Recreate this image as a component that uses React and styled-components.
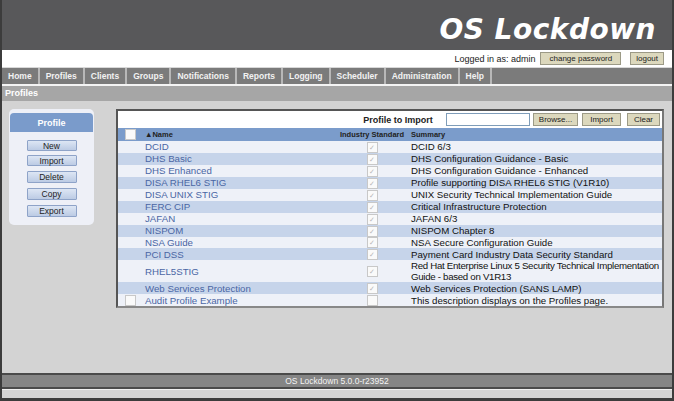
import styled, { createGlobalStyle } from 'styled-components';

const GlobalStyle = createGlobalStyle`
  html, body {
    margin: 0;
    padding: 0;
    background: #d3d3d3;
  }
  body {
    font-family: "Liberation Sans", Arial, sans-serif;
    font-size: 10px;
  }
`;

const Page = styled.div`
  width: 674px;
  height: 401px;
  box-sizing: border-box;
  border-left: 2px solid #3c3c3c;
  border-right: 2px solid #3c3c3c;
  border-bottom: 3px solid #3c3c3c;
  display: flex;
  flex-direction: column;
  background: #d3d3d3;
  overflow: hidden;
`;

const Banner = styled.div`
  height: 50px;
  background: #58585a;
  display: flex;
  align-items: flex-end;
  justify-content: flex-end;
  padding-right: 16px;
`;

const Title = styled.h1`
  margin: 0 0 4px;
  color: #fff;
  font-family: "DejaVu Sans", Verdana, sans-serif;
  font-weight: bold;
  font-style: italic;
  font-size: 28px;
  letter-spacing: 0.5px;
`;

const UserBar = styled.div`
  height: 17px;
  background: #fff;
  display: flex;
  align-items: center;
  justify-content: flex-end;
  gap: 5px;
  padding-right: 8px;
  font-size: 9px;
  color: #222;
`;

const SmallButton = styled.button`
  font-family: "Liberation Sans", Arial, sans-serif;
  font-size: 8px;
  height: 13px;
  padding: 0 ${p => p.$pad || 5}px;
  margin: 0 0 0 ${p => p.$ml || 0}px;
  background: #dcd8bd;
  border: 1px solid #9c9a86;
  color: #222;
  line-height: 11px;
`;

const Nav = styled.div`
  height: 16px;
  background: #7b7b7b;
  border-top: 1px solid #d8d8d8;
  border-bottom: 2px solid #f4f4f4;
  display: flex;
`;

const NavItem = styled.div`
  padding: 0 6px;
  color: #f2f2f2;
  font-weight: bold;
  font-size: 8.5px;
  line-height: 16px;
  border-right: 2px solid #b8b8b8;
`;

const SubHeader = styled.div`
  height: 15px;
  background: #a6a6a6;
  color: #fff;
  font-weight: bold;
  font-size: 9px;
  line-height: 15px;
  padding-left: 3px;
`;

const Content = styled.div`
  flex: 1;
  display: flex;
  align-items: flex-start;
  gap: 22px;
  padding: 8px 8px 0 7px;
`;

const SidePanel = styled.div`
  width: 85px;
  background: #eef0f7;
  border-radius: 5px;
  padding: 4px 0 8px;
  display: flex;
  flex-direction: column;
  align-items: center;
`;

const PanelHead = styled.div`
  align-self: stretch;
  margin: 0 1px 4px;
  background: #7a9bcb;
  border-radius: 4px 4px 0 0;
  color: #fff;
  text-align: center;
  font-weight: bold;
  font-size: 9px;
  height: 19px;
  line-height: 21px;
`;

const PanelButton = styled.button`
  width: 50px;
  height: ${p => p.$h || 11}px;
  margin: ${p => p.$mt || 4}px 0 0;
  padding: 0;
  font-family: "Liberation Sans", Arial, sans-serif;
  font-size: 8.5px;
  color: #222;
  background: linear-gradient(#dde6f4, #bccbe4);
  border: 1px solid #8ea3c8;
  border-radius: 1px;
`;

const TableBox = styled.div`
  flex: 1;
  background: #fff;
  border: 2px solid #555;
  border-right-color: #777;
  border-bottom-color: #888;
`;

const ImportBar = styled.div`
  height: 17px;
  display: flex;
  align-items: center;
  justify-content: flex-end;
  padding-right: 2px;
`;

const ImportLabel = styled.span`
  font-weight: bold;
  font-size: 9px;
  color: #222;
  margin-right: 13px;
`;

const FileInput = styled.div`
  width: 82px;
  height: 11px;
  border: 1px solid #7f9db9;
  background: #fff;
`;

const Grid = styled.table`
  width: 100%;
  table-layout: fixed;
  border-collapse: collapse;
  font-size: 9.7px;
`;

const HeadCell = styled.th`
  background: #7b9ccb;
  color: #222;
  font-size: 7.5px;
  font-weight: bold;
  text-align: ${p => p.$align || 'left'};
  height: 13px;
  padding: 0 2px;
  white-space: nowrap;
`;

const Row = styled.tr`
  background: ${p => (p.$alt ? '#c6d4ea' : '#eef1f8')};
`;

const Cell = styled.td`
  padding: 0 2px;
  height: 11.2px;
  line-height: 11px;
  vertical-align: middle;
  white-space: ${p => (p.$tight ? 'pre' : 'normal')};
  letter-spacing: ${p => (p.$tight ? '-0.3px' : 'normal')};
  color: ${p => (p.$link ? '#4a66a4' : '#111')};
  text-align: ${p => p.$align || 'left'};
`;

const Check = styled.span`
  display: inline-block;
  width: 9px;
  height: 9px;
  vertical-align: middle;
  border: 1px solid #c8c8c8;
  background: #fafafa;
  color: #b8b8b8;
  font-size: 7px;
  line-height: 9px;
  text-align: center;
`;

const Footer = styled.div`
  margin-top: auto;
`;

const FooterBar = styled.div`
  height: 12px;
  background: #858585;
  border-top: 2px solid #4a4a4a;
  border-bottom: 2px solid #4a4a4a;
  color: #f4f4f4;
  font-size: 8.5px;
  text-align: center;
  line-height: 12px;
`;

const FooterBase = styled.div`
  height: 8px;
  background: #d3d3d3;
  border-top: 1px solid #f0f0f0;
`;

const navItems = ['Home', 'Profiles', 'Clients', 'Groups', 'Notifications', 'Reports', 'Logging', 'Scheduler', 'Administration', 'Help'];

const profiles = [
  ['DCID', 'DCID 6/3', true],
  ['DHS Basic', 'DHS Configuration Guidance - Basic', true],
  ['DHS Enhanced', 'DHS Configuration Guidance - Enhanced', true],
  ['DISA RHEL6 STIG', 'Profile supporting DISA RHEL6 STIG (V1R10)', true],
  ['DISA UNIX STIG', 'UNIX Security Technical Implementation Guide', true],
  ['FERC CIP', 'Critical Infrastructure Protection', true],
  ['JAFAN', 'JAFAN 6/3', true],
  ['NISPOM', 'NISPOM Chapter 8', true],
  ['NSA Guide', 'NSA Secure Configuration Guide', true],
  ['PCI DSS', 'Payment Card Industry Data Security Standard', true],
  ['RHEL5STIG', 'Red Hat Enterprise Linux 5 Security Technical Implementation\nGuide - based on V1R13', true],
  ['Web Services Protection', 'Web Services Protection (SANS LAMP)', true],
  ['Audit Profile Example', 'This description displays on the Profiles page.', false],
];

export default function App() {
  return (
    <>
      <GlobalStyle />
      <Page>
        <Banner>
          <Title>OS Lockdown</Title>
        </Banner>
        <UserBar>
          <span>Logged in as: admin</span>
          <SmallButton $pad={8}>change password</SmallButton>
          <SmallButton $ml={4}>logout</SmallButton>
        </UserBar>
        <Nav>
          {navItems.map(n => (
            <NavItem key={n}>{n}</NavItem>
          ))}
        </Nav>
        <SubHeader>Profiles</SubHeader>
        <Content>
          <SidePanel>
            <PanelHead>Profile</PanelHead>
            <PanelButton $mt={4}>New</PanelButton>
            <PanelButton $mt={4}>Import</PanelButton>
            <PanelButton $mt={5} $h={12}>Delete</PanelButton>
            <PanelButton $mt={5} $h={12}>Copy</PanelButton>
            <PanelButton $mt={5} $h={12}>Export</PanelButton>
          </SidePanel>
          <TableBox>
            <ImportBar>
              <ImportLabel>Profile to Import</ImportLabel>
              <FileInput />
              <SmallButton $pad={5} $ml={3}>Browse...</SmallButton>
              <SmallButton $pad={7} $ml={4}>Import</SmallButton>
              <SmallButton $pad={6} $ml={6}>Clear</SmallButton>
            </ImportBar>
            <Grid>
              <colgroup>
                <col style={{ width: 25 }} />
                <col style={{ width: 192 }} />
                <col style={{ width: 74 }} />
                <col />
              </colgroup>
              <thead>
                <tr>
                  <HeadCell $align="center"><Check /></HeadCell>
                  <HeadCell>▲Name</HeadCell>
                  <HeadCell $align="center">Industry Standard</HeadCell>
                  <HeadCell>Summary</HeadCell>
                </tr>
              </thead>
              <tbody>
                {profiles.map(([name, summary, std], i) => (
                  <Row key={name} $alt={i % 2 === 1}>
                    <Cell $align="center">{!std && <Check />}</Cell>
                    <Cell $link>{name}</Cell>
                    <Cell $align="center"><Check>{std ? '✓' : ''}</Check></Cell>
                    <Cell $tight={summary.includes('\n')}>{summary}</Cell>
                  </Row>
                ))}
              </tbody>
            </Grid>
          </TableBox>
        </Content>
        <Footer>
          <FooterBar>OS Lockdown 5.0.0-r23952</FooterBar>
          <FooterBase />
        </Footer>
      </Page>
    </>
  );
}
